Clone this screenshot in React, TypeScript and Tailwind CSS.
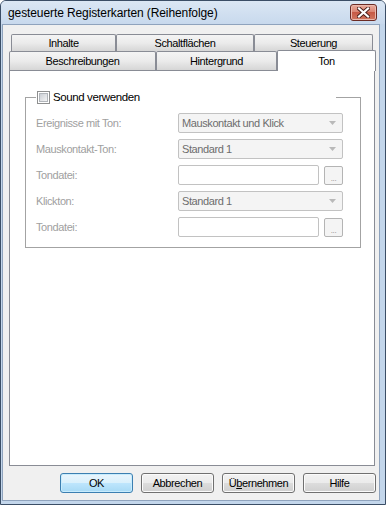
import React from "react";

type TabProps = {
  label: string;
  width: string;
  active?: boolean;
};

const Tab = ({ label, width, active }: TabProps) => {
  if (active) {
    return (
      <div
        className={`${width} relative z-10 -mt-[1px] h-[21px] flex items-center justify-center bg-white border border-b-0 border-[#898c95] rounded-t-[2px] text-black`}
      >
        {label}
      </div>
    );
  }
  return (
    <div
      className={`${width} h-full flex items-center justify-center border border-b-0 border-[#898c95] rounded-t-[2px] bg-linear-to-b from-[#f4f4f4] via-[#ebebeb] to-[#d6d6d6] text-black`}
    >
      {label}
    </div>
  );
};

const Combo = ({ value }: { value: string }) => (
  <div className="w-[165px] h-[20px] flex items-center justify-between pl-[3px] pr-[6px] bg-[#f4f4f4] border border-[#c2c2c2] rounded-[2px] text-[#6d6d6d]">
    <span>{value}</span>
    <svg width="7" height="4" viewBox="0 0 7 4">
      <path d="M0 0h7L3.5 4z" fill="#b9b9b9" />
    </svg>
  </div>
);

const FileInput = () => (
  <div className="flex items-center gap-[5px]">
    <div className="w-[141px] h-[20px] bg-white border border-[#c2c2c2] rounded-[2px]" />
    <div className="w-[19px] h-[19px] flex items-end justify-center pb-[1px] bg-[#f4f4f4] border border-[#b4b4b4] rounded-[2px] text-[8px] leading-none text-[#8a8a8a]">
      ...
    </div>
  </div>
);

const Row = ({ label, children }: { label: string; children: React.ReactNode }) => (
  <div className="flex items-center h-[20px]">
    <div className="w-[142px] text-[#a0a0a0]">{label}</div>
    {children}
  </div>
);

const Button = ({ children, primary }: { children: React.ReactNode; primary?: boolean }) => (
  <button
    className={
      primary
        ? "w-[73px] h-[20px] flex items-center justify-center border border-[#3c7fb1] rounded-[3px] bg-[linear-gradient(#e9f5fd,#d9f0fc_50%,#bee6fd_50%,#a7d9f5)] shadow-[inset_0_0_0_1px_#c8ecfd] text-black"
        : "w-[73px] h-[20px] flex items-center justify-center border border-[#707070] rounded-[3px] bg-[linear-gradient(#f2f2f2,#ebebeb_50%,#dddddd_50%,#cfcfcf)] shadow-[inset_0_0_0_1px_#fbfbfb] text-black"
    }
  >
    {children}
  </button>
);

export default function App() {
  return (
    <div className="w-[386px] h-[505px] flex flex-col overflow-hidden border border-[#3b4e66] rounded-t-[6px] bg-[#c3d6eb] font-['Liberation_Sans',Arial,sans-serif] text-[11px] tracking-[-0.4px] leading-none">
      {/* title bar */}
      <div className="h-[23px] shrink-0 flex items-center justify-between pl-[7px] pr-[8px] bg-linear-to-b from-[#dbe7f4] to-[#c8d9ed]">
        <span className="text-[12px] tracking-[-0.1px] text-black">
          gesteuerte Registerkarten (Reihenfolge)
        </span>
        <div className="w-[27px] h-[17px] flex items-center justify-center border border-[#6b2b24] rounded-[3px] bg-[linear-gradient(#e9aa9c,#d9826f_50%,#c75a45_50%,#d0765f)] shadow-[inset_0_0_0_1px_#eab9ad]">
          <svg width="13" height="11" viewBox="0 0 13 11">
            <path d="M2 1.5l9 8M11 1.5l-9 8" stroke="#4a1f1a" strokeWidth="4" strokeLinecap="square" />
            <path d="M2 1.5l9 8M11 1.5l-9 8" stroke="#ffffff" strokeWidth="2.2" strokeLinecap="square" />
          </svg>
        </div>
      </div>

      {/* client */}
      <div className="flex-1 flex pl-[1px] pr-[5px] pb-[3px]">
        <div className="flex-1 flex flex-col pt-[9px] bg-[#f0f0f0] border border-[#8fa3bd]">
          <div className="flex h-[17px] pl-[8px]">
            <Tab label="Inhalte" width="w-[105px]" />
            <Tab label="Schaltflächen" width="w-[138px]" />
            <Tab label="Steuerung" width="w-[119px]" />
          </div>
          <div className="flex h-[19px] pl-[6px]">
            <Tab label="Beschreibungen" width="w-[147px]" />
            <Tab label="Hintergrund" width="w-[121px]" />
            <Tab label="Ton" width="w-[99px]" active />
          </div>

          <div className="ml-[6px] w-[366px] h-[396px] shrink-0 bg-white border border-[#898c95]">
            <fieldset className="ml-[15px] mt-[20px] w-[336px] pl-[10px] pr-[17px] pt-[9px] pb-[10px] border border-[#a3a3a3]">
              <legend className="w-[300px] pl-[1px] h-[13px] flex items-center">
                <div className="w-[13px] h-[13px] p-[1px] bg-white border border-[#8e8f8f]">
                  <div className="w-full h-full border border-[#b1b5ba] bg-linear-to-br from-[#cbcfd5] to-[#f4f4f4]" />
                </div>
                <span className="ml-[3px] text-[11.5px] text-black">Sound verwenden</span>
              </legend>
              <div className="flex flex-col gap-[6px]">
                <Row label="Ereignisse mit Ton:">
                  <Combo value="Mauskontakt und Klick" />
                </Row>
                <Row label="Mauskontakt-Ton:">
                  <Combo value="Standard 1" />
                </Row>
                <Row label="Tondatei:">
                  <FileInput />
                </Row>
                <Row label="Klickton:">
                  <Combo value="Standard 1" />
                </Row>
                <Row label="Tondatei:">
                  <FileInput />
                </Row>
              </div>
            </fieldset>
          </div>

          <div className="mt-[7px] flex justify-end gap-[8px] pr-[3px]">
            <Button primary>OK</Button>
            <Button>Abbrechen</Button>
            <Button>
              Ü<span className="underline">b</span>ernehmen
            </Button>
            <Button>Hilfe</Button>
          </div>
        </div>
      </div>
    </div>
  );
}
